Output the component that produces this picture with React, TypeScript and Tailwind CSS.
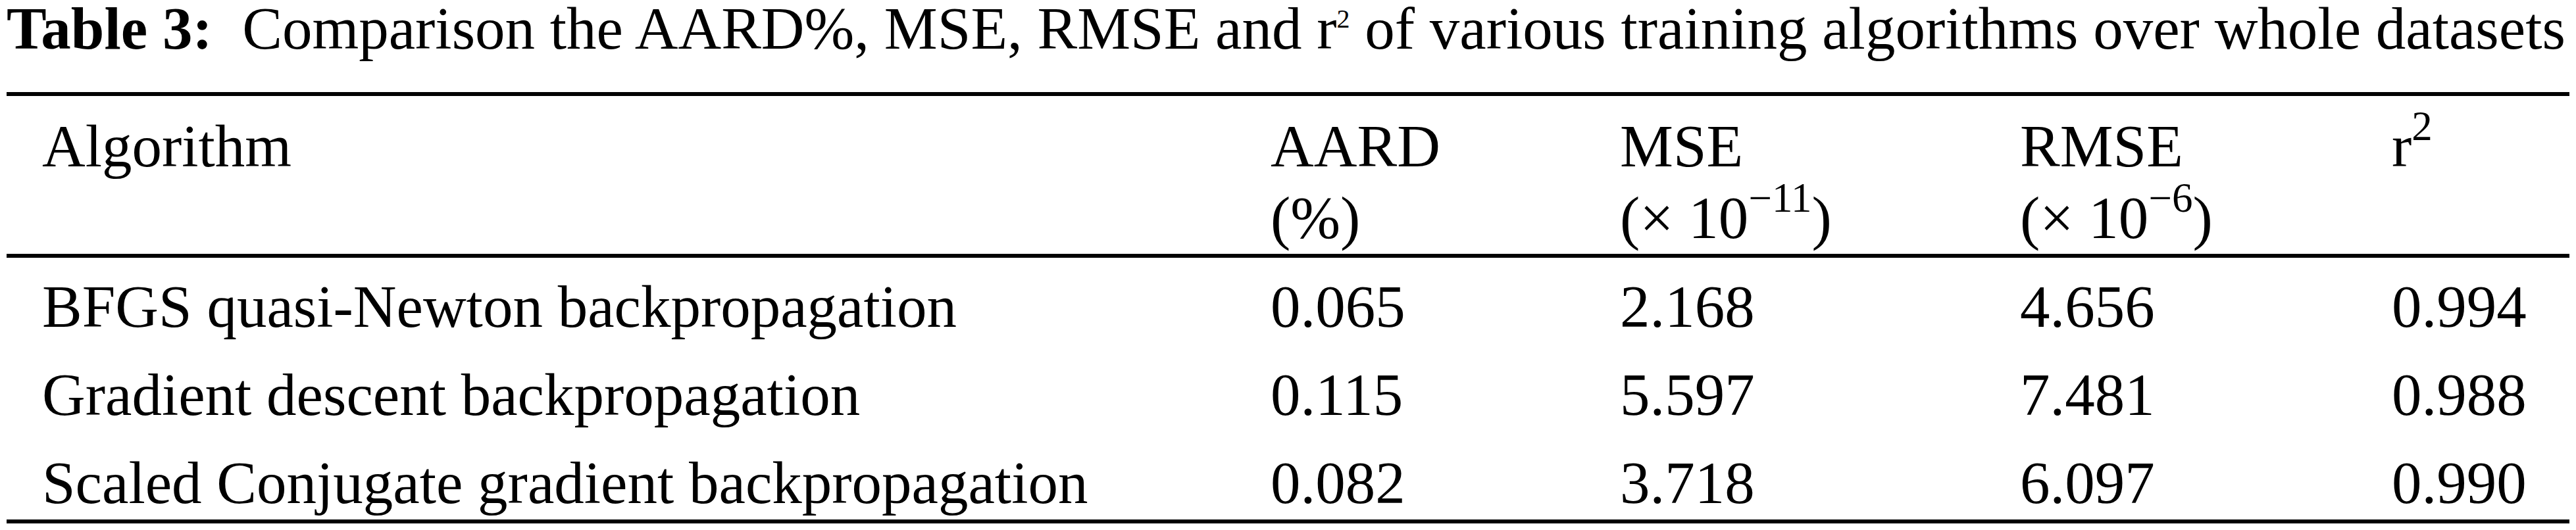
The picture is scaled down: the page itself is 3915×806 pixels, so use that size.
const rows = [
  { name: 'BFGS quasi-Newton backpropagation', aard: '0.065', mse: '2.168', rmse: '4.656', r2: '0.994' },
  { name: 'Gradient descent backpropagation', aard: '0.115', mse: '5.597', rmse: '7.481', r2: '0.988' },
  { name: 'Scaled Conjugate gradient backpropagation', aard: '0.082', mse: '3.718', rmse: '6.097', r2: '0.990' },
];

const cols = 'grid grid-cols-[1867px_531px_608px_565px_1fr] pl-[54px]';

const Sup = ({ children }: { children: React.ReactNode }) => (
  <sup className="text-[63px] top-[-40px]">{children}</sup>
);

const App = () => {
  return (
    <div className="w-[3915px] h-[806px] bg-white px-[10px] text-black text-[91px] font-['Liberation_Serif','Times_New_Roman',serif]">
      <h3 className="leading-none whitespace-nowrap mt-[-2px] mb-[51px]">
        <span className="font-bold">Table 3:</span>
        {'\u00a0\u00a0'}Comparison the AARD%, MSE, RMSE and r<sup className="text-[40px] top-[-32px]">2</sup> of various training algorithms over whole datasets
      </h3>
      <div className="border-t-[6px] border-b-[6px] border-black">
        <div className={`${cols} pt-[22px] leading-[109px]`}>
          <div>Algorithm</div>
          <div>
            AARD
            <br />
            (%)
          </div>
          <div>
            MSE
            <br />
            (× 10<Sup>−11</Sup>)
          </div>
          <div>
            RMSE
            <br />
            (× 10<Sup>−6</Sup>)
          </div>
          <div>
            r<Sup>2</Sup>
          </div>
        </div>
        <div className="border-t-[6px] border-black">
          {rows.map((row) => (
            <div key={row.name} className={`${cols} pt-[25px] pb-[9px] last:pb-[5px] leading-[100px] whitespace-nowrap`}>
              <div>{row.name}</div>
              <div>{row.aard}</div>
              <div>{row.mse}</div>
              <div>{row.rmse}</div>
              <div>{row.r2}</div>
            </div>
          ))}
        </div>
      </div>
    </div>
  );
};

export default App;
